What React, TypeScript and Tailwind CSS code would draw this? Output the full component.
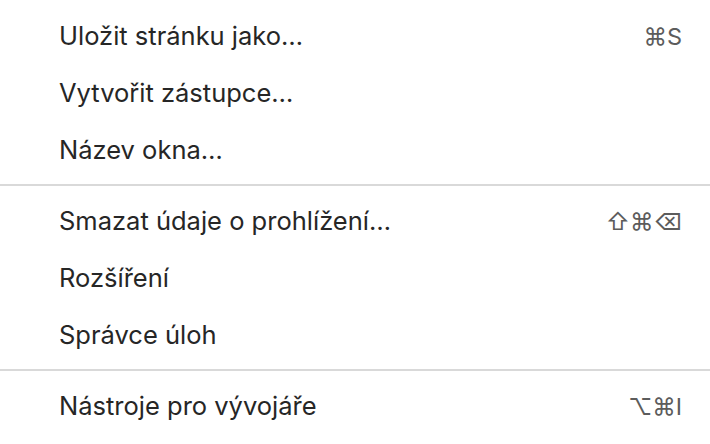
import React from "react";

type Item = { label: string; shortcut?: string } | "sep";

const ITEMS: Item[] = [
  { label: "Uložit stránku jako…", shortcut: "⌘S" },
  { label: "Vytvořit zástupce…" },
  { label: "Název okna…" },
  "sep",
  { label: "Smazat údaje o prohlížení…", shortcut: "⇧⌘⌫" },
  { label: "Rozšíření" },
  { label: "Správce úloh" },
  "sep",
  { label: "Nástroje pro vývojáře", shortcut: "⌥⌘I" },
];

export default function App() {
  return (
    <div
      className="w-[710px] h-[444px] overflow-hidden bg-white pt-[8px]"
      style={{ fontFamily: "Inter, 'Noto Sans', 'DejaVu Sans', sans-serif" }}
    >
      {ITEMS.map((it, i) =>
        it === "sep" ? (
          <div key={i} className="mt-[5px] mb-[7px] h-[2px] bg-[#d9d9d9]" />
        ) : (
          <div
            key={i}
            className="flex h-[57px] items-center justify-between pl-[59px] pr-[28px]"
          >
            <span className="text-[25.5px] text-[#262626]">{it.label}</span>
            {it.shortcut && (
              <span className="text-[23.5px] text-[#5c5c5c]">{it.shortcut}</span>
            )}
          </div>
        ),
      )}
    </div>
  );
}
